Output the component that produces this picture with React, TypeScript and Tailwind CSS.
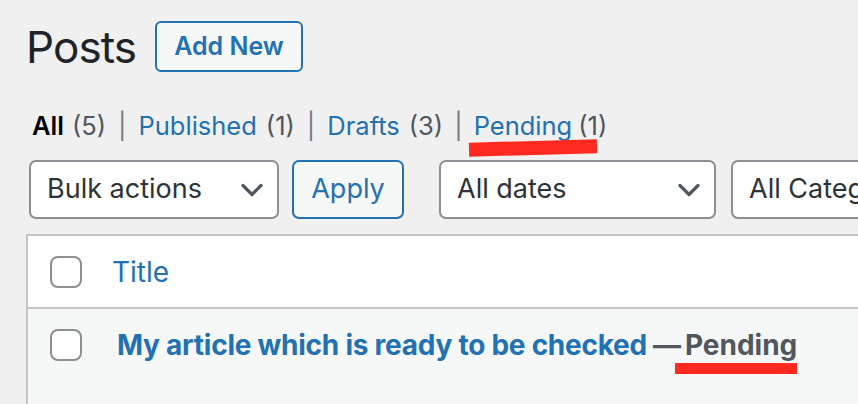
function Chevron() {
  return (
    <svg width="22" height="14" viewBox="0 0 22 14" fill="none" className="shrink-0">
      <path d="M2 2.5l9 9 9-9" stroke="#50575e" strokeWidth="3.2" strokeLinecap="round" strokeLinejoin="round" />
    </svg>
  );
}

function Select({ label, width }: { label: string; width: string }) {
  return (
    <div
      className={`flex h-[59px] shrink-0 items-center justify-between overflow-hidden rounded-[7px] border-2 border-[#8c8f94] bg-white pl-[16px] pr-[14px] text-[27px] whitespace-nowrap text-[#2c3338] ${width}`}
    >
      <span>{label}</span>
      <Chevron />
    </div>
  );
}

function Checkbox() {
  return <div className="h-[32px] w-[32px] shrink-0 rounded-[8px] border-2 border-[#8c8f94] bg-white" />;
}

export default function App() {
  return (
    <div className="h-[404px] w-[858px] overflow-hidden bg-[#f0f0f1] pl-[26px] pt-[21px] font-['Inter',sans-serif]">
      {/* Heading */}
      <div className="flex h-[51px] items-center gap-[19px]">
        <h1 className="text-[44px] leading-none font-normal tracking-[-0.9px] text-[#1d2327]">Posts</h1>
        <button className="flex h-[51px] items-center rounded-[6px] border-2 border-[#2271b1] bg-[#f6f7f7] px-[17px] text-[25px] font-semibold text-[#2271b1]">
          Add New
        </button>
      </div>

      {/* Status links */}
      <div className="mt-[37px] flex items-center pl-[6px] text-[25.5px] leading-[34px] text-[#50575e]">
        <span className="font-semibold text-black">All</span>
        <span className="ml-[8px]">(5)</span>
        <span className="mx-[12px] text-[#787c82]">|</span>
        <span className="text-[#2271b1]">Published</span>
        <span className="ml-[9px]">(1)</span>
        <span className="mx-[12px] text-[#787c82]">|</span>
        <span className="text-[#2271b1]">Drafts</span>
        <span className="ml-[9px]">(3)</span>
        <span className="mx-[11px] text-[#787c82]">|</span>
        <span className="relative text-[#2271b1]">
          Pending
          <span className="absolute left-[-5px] top-[32px] h-[14px] w-[128px] -rotate-[1.5deg] bg-[#ff2a1f]" />
        </span>
        <span className="ml-[6px]">(1)</span>
      </div>

      {/* Filters */}
      <div className="mt-[17px] flex items-center pl-[3px]">
        <Select label="Bulk actions" width="w-[250px]" />
        <button className="ml-[13px] flex h-[59px] w-[112px] shrink-0 items-center justify-center rounded-[7px] border-2 border-[#2271b1] bg-[#f6f7f7] text-[27px] text-[#2271b1]">
          Apply
        </button>
        <div className="ml-[35px]">
          <Select label="All dates" width="w-[277px]" />
        </div>
        <div className="ml-[15px]">
          <Select label="All Categories" width="w-[260px]" />
        </div>
      </div>

      {/* Table */}
      <div className="mt-[15px] w-[900px] border-l-2 border-t-2 border-[#c3c4c7] bg-white">
        <div className="flex h-[73px] items-center border-b-2 border-[#c3c4c7] pl-[22px]">
          <Checkbox />
          <span className="ml-[30px] text-[28px] text-[#2271b1]">Title</span>
        </div>
        <div className="flex h-[100px] items-start bg-[#f6f7f7] pl-[22px] pt-[20px]">
          <Checkbox />
          <div className="ml-[35px] -mt-[3px] flex items-center text-[28px] leading-[38px] font-bold text-[#2271b1]">
            <span className="tracking-[-0.25px]">My article which is ready to be checked</span>
            <span className="ml-[6px] text-[#50575e]">—</span>
            <span className="relative ml-[4px] text-[#50575e]">
              Pending
              <span className="absolute left-[-10px] top-[37px] h-[11px] w-[122px] bg-[#ff2a1f]" />
            </span>
          </div>
        </div>
      </div>
    </div>
  );
}
